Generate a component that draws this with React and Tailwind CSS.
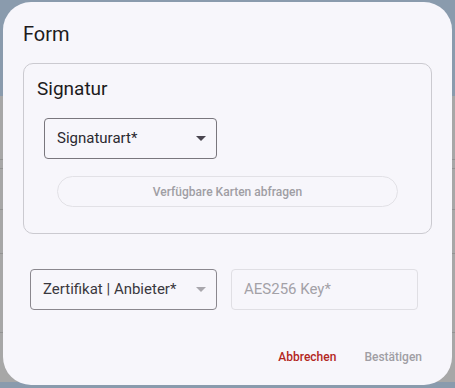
import React from 'react';

// Small caret used by the MD select fields
function Caret({ cls }) {
  return (
    <svg width="10" height="5" viewBox="0 0 10 5" className={cls}>
      <path d="M0 0 L10 0 L5 5 Z" fill="currentColor" />
    </svg>
  );
}

export default function App() {
  const font = { fontFamily: 'Roboto, "Noto Sans", sans-serif' };

  return (
    <div className="relative w-[455px] h-[388px] overflow-hidden bg-[#a7a7a7]" style={font}>
      {/* page behind the scrim */}
      <div className="flex flex-col h-full">
        <div className="h-[96px] bg-[#8a9bad]" />
        <div className="h-[64px] border-b border-[#939393]" />
        <div className="h-[9px] border-b border-[#939393]" />
        <div className="h-[41px] border-b border-[#939393]" />
        <div className="h-[44px] border-b border-[#939393]" />
        <div className="h-[79px] border-b border-[#939393]" />
        <div className="flex-1" />
        <div className="h-[6px] bg-[#8a9bad]" />
      </div>

      {/* dialog */}
      <div className="absolute left-[3px] top-[2px] w-[449px] h-[383px] rounded-[28px] bg-[#f7f6fb] pt-[18px] px-5">
        <h2 className="text-[20px] leading-[28px] text-[#1d1b20]">Form</h2>

        <div className="mt-[15px] h-[171px] rounded-[10px] border border-[#cbcad0] pt-[13px] pl-[13px]">
          <div className="text-[19px] leading-6 text-[#1d1b20]">Signatur</div>

          <div className="mt-[17px] ml-[7px] w-[173px] h-[41px] rounded-[4px] border border-[#79767d] flex items-center justify-between pl-[12px] pr-[10px]">
            <span className="text-[15px] text-[#2b2930]">Signaturart*</span>
            <Caret cls="text-[#49454f]" />
          </div>

          <div className="mt-[17px] ml-[20px] w-[341px] h-[31px] rounded-full border border-[#e2e1e6] flex items-center justify-center">
            <span className="text-[12px] font-medium text-[#a09ea4]">Verfügbare Karten abfragen</span>
          </div>
        </div>

        <div className="mt-[35px] ml-[7px] flex gap-[14px]">
          <div className="w-[187px] h-[41px] rounded-[4px] border border-[#8a878e] flex items-center justify-between pl-[12px] pr-[10px]">
            <span className="text-[15px] text-[#3a383e]">Zertifikat | Anbieter*</span>
            <Caret cls="text-[#a9a7ad]" />
          </div>
          <div className="w-[187px] h-[41px] rounded-[4px] border border-[#e0dfe4] flex items-center pl-[12px]">
            <span className="text-[15px] text-[#a3a1a7]">AES256 Key*</span>
          </div>
        </div>

        <div className="mt-[31px] -mr-[1px] flex justify-end gap-[6px]">
          <button className="h-[32px] px-[11px] text-[12px] leading-4 font-medium text-[#b3261e]">Abbrechen</button>
          <button className="h-[32px] px-[11px] text-[12px] leading-4 font-medium text-[#a09ea4]">Bestätigen</button>
        </div>
      </div>
    </div>
  );
}
